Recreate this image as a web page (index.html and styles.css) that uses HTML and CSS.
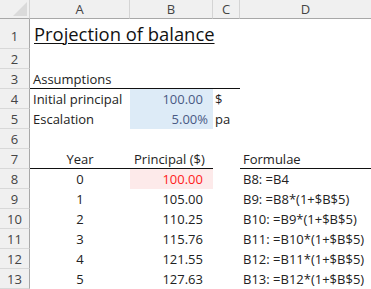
FILE: index.html
```html
<!DOCTYPE html>
<html>
<head>
<meta charset="utf-8">
<link rel="stylesheet" href="styles.css">
</head>
<body>
<div class="sheet">
  <div class="corner"><svg class="tri" width="14" height="14" viewBox="0 0 14 14"><polygon points="14,0 14,14 0,14" fill="#dadada"/></svg></div>
  <div class="ch">A</div><div class="ch">B</div><div class="ch">C</div><div class="ch last">D</div>

  <div class="rh tall">1</div><div class="c title-cell"><span class="title">Projection of balance</span></div><div class="c"></div><div class="c"></div><div class="c"></div>
  <div class="rh">2</div><div class="c"></div><div class="c"></div><div class="c"></div><div class="c"></div>
  <div class="rh">3</div><div class="c bb">Assumptions</div><div class="c bb"></div><div class="c bb"></div><div class="c"></div>
  <div class="rh">4</div><div class="c">Initial principal</div><div class="c num input pad-paren">100.00</div><div class="c unit">$</div><div class="c"></div>
  <div class="rh">5</div><div class="c">Escalation</div><div class="c num input pad-pct">5.00%</div><div class="c unit">pa</div><div class="c"></div>
  <div class="rh">6</div><div class="c"></div><div class="c"></div><div class="c"></div><div class="c"></div>
  <div class="rh">7</div><div class="c ctr bb">Year</div><div class="c head-b bb">Principal ($)</div><div class="c"></div><div class="c bb formula">Formulae</div>
  <div class="rh">8</div><div class="c ctr">0</div><div class="c num link pad-paren">100.00</div><div class="c"></div><div class="c formula">B8: =B4</div>
  <div class="rh">9</div><div class="c ctr">1</div><div class="c num pad-paren">105.00</div><div class="c"></div><div class="c formula">B9: =B8*(1+$B$5)</div>
  <div class="rh">10</div><div class="c ctr">2</div><div class="c num pad-paren">110.25</div><div class="c"></div><div class="c formula">B10: =B9*(1+$B$5)</div>
  <div class="rh">11</div><div class="c ctr">3</div><div class="c num pad-paren">115.76</div><div class="c"></div><div class="c formula">B11: =B10*(1+$B$5)</div>
  <div class="rh">12</div><div class="c ctr">4</div><div class="c num pad-paren">121.55</div><div class="c"></div><div class="c formula">B12: =B11*(1+$B$5)</div>
  <div class="rh">13</div><div class="c ctr">5</div><div class="c num pad-paren">127.63</div><div class="c"></div><div class="c formula">B13: =B12*(1+$B$5)</div>
</div>
</body>
</html>
```
FILE: styles.css
```css
html, body {
  margin: 0;
  padding: 0;
  background: #ffffff;
}
.sheet {
  display: grid;
  grid-template-columns: 30px 100px 83px 27px 131px;
  grid-template-rows: 19px 30px repeat(12, 20px);
  width: 371px;
  height: 289px;
  overflow: hidden;
  font-family: "Open Sans", "Noto Sans", sans-serif;
  font-size: 13px;
  color: #222222;
}
.corner {
  background: #f0f0f0;
  border-right: 1px solid #d4d4d4;
  border-bottom: 1px solid #a8a8a8;
  display: flex;
  align-items: flex-end;
  justify-content: flex-end;
  padding: 0 2px 2px 0;
}
.tri { display: block; }
.ch {
  background: #f0f0f0;
  border-right: 1px solid #d4d4d4;
  border-bottom: 1px solid #a8a8a8;
  color: #444444;
  font-size: 13px;
  display: flex;
  align-items: center;
  justify-content: center;
  line-height: 18px;
}
.ch.last { border-right: none; }
.rh {
  background: #f0f0f0;
  border-right: 1px solid #a8a8a8;
  border-bottom: 1px solid #d8d8d8;
  color: #444444;
  font-size: 13px;
  display: flex;
  align-items: center;
  justify-content: center;
}
.rh.tall {
  align-items: flex-end;
  padding-bottom: 3px;
}
.c {
  display: flex;
  align-items: center;
  padding: 0 3px;
  white-space: nowrap;
  line-height: 20px;
}
.title-cell {
  overflow: visible;
  align-items: flex-end;
  padding-left: 4px;
  padding-bottom: 3px;
  z-index: 1;
}
.title {
  font-size: 18.4px;
  line-height: 24px;
  text-decoration: underline;
  text-decoration-thickness: 1px;
  text-underline-offset: 2px;
  color: #111111;
}
.bb { border-bottom: 1px solid #111111; }
.num { justify-content: flex-end; }
.pad-paren { padding-right: 10px; }
.pad-pct { padding-right: 5px; }
.input {
  background: #ddebf7;
  color: #4a5a84;
}
.link {
  background: #fdeaea;
  color: #ff2020;
}
.unit { padding-left: 2px; }
.ctr { justify-content: center; }
.head-b { justify-content: flex-start; padding-left: 4px; }
.formula { padding-left: 3px; }
```
